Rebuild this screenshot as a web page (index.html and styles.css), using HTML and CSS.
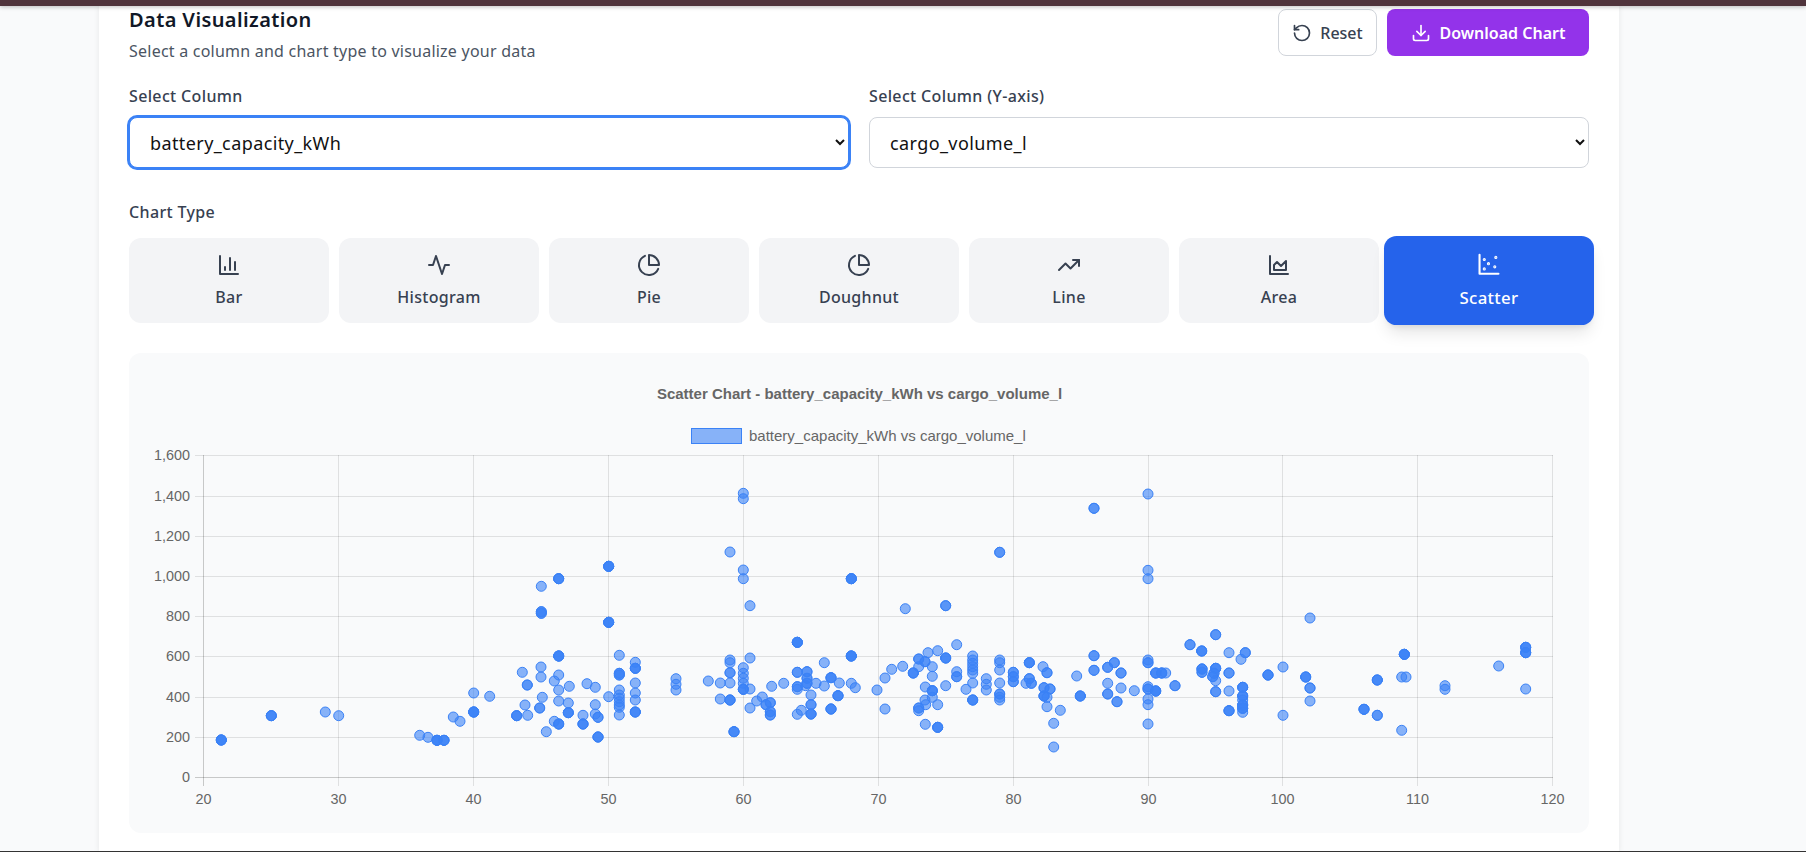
FILE: index.html
```html
<!DOCTYPE html>
<html lang="en">
<head>
<meta charset="utf-8">
<title>Data Visualization</title>
<link rel="stylesheet" href="styles.css">
</head>
<body>
<div class="topbar"></div>
<main class="card">
  <header class="head">
    <div>
      <h2 class="title">Data Visualization</h2>
      <p class="subtitle">Select a column and chart type to visualize your data</p>
    </div>
    <div class="actions">
      <button class="btn btn-reset"><svg class="ico-sm" viewBox="0 0 24 24"><path d="M3 12a9 9 0 1 0 9-9 9.75 9.75 0 0 0-6.74 2.74L3 8"/><path d="M3 3v5h5"/></svg>Reset</button>
      <button class="btn btn-download"><svg class="ico-sm" viewBox="0 0 24 24"><path d="M21 15v4a2 2 0 0 1-2 2H5a2 2 0 0 1-2-2v-4"/><path d="m7 10 5 5 5-5"/><path d="M12 15V3"/></svg>Download Chart</button>
    </div>
  </header>

  <div class="selects">
    <label class="field"><span class="label">Select Column</span>
      <select class="select select-focus"><option>battery_capacity_kWh</option></select></label>
    <label class="field"><span class="label">Select Column (Y-axis)</span>
      <select class="select"><option>cargo_volume_l</option></select></label>
  </div>

  <div class="label type-label">Chart Type</div>
  <div class="types">
    <button class="type"><svg class="ico" viewBox="0 0 24 24"><path d="M3 3v18h18"/><path d="M18 17V9"/><path d="M13 17V5"/><path d="M8 17v-3"/></svg>Bar</button>
    <button class="type"><svg class="ico" viewBox="0 0 24 24"><path d="M22 12h-4l-3 9L9 3l-3 9H2"/></svg>Histogram</button>
    <button class="type"><svg class="ico" viewBox="0 0 24 24"><path d="M21.21 15.89A10 10 0 1 1 8 2.83"/><path d="M22 12A10 10 0 0 0 12 2v10z"/></svg>Pie</button>
    <button class="type"><svg class="ico" viewBox="0 0 24 24"><path d="M21.21 15.89A10 10 0 1 1 8 2.83"/><path d="M22 12A10 10 0 0 0 12 2v10z"/></svg>Doughnut</button>
    <button class="type"><svg class="ico" viewBox="0 0 24 24"><path d="m22 7-8.5 8.5-5-5L2 17"/><path d="M16 7h6v6"/></svg>Line</button>
    <button class="type"><svg class="ico" viewBox="0 0 24 24"><path d="M3 3v18h18"/><path d="M7 12v5h12V8l-5 5-4-4Z"/></svg>Area</button>
    <button class="type type-active"><svg class="ico" viewBox="0 0 24 24"><path d="M3 3v18h18"/><circle class="ico-dot" cx="7.5" cy="7.5" r=".5"/><circle class="ico-dot" cx="18.5" cy="5.5" r=".5"/><circle class="ico-dot" cx="11.5" cy="11.5" r=".5"/><circle class="ico-dot" cx="7.5" cy="16.5" r=".5"/><circle class="ico-dot" cx="17.5" cy="14.5" r=".5"/></svg>Scatter</button>
  </div>

  <section class="chart-box">
    <svg class="chart" id="chart" viewBox="129 353 1460 480">
      <text class="c-title" x="859.5" y="399">Scatter Chart - battery_capacity_kWh vs cargo_volume_l</text>
      <rect class="c-swatch" x="691.5" y="428.5" width="50" height="15"/>
      <text class="c-legend" x="749" y="440.5">battery_capacity_kWh vs cargo_volume_l</text>
      <path class="c-grid" d="M195 455.5H1553M195 496.5H1553M195 536.5H1553M195 576.5H1553M195 616.5H1553M195 656.5H1553M195 697.5H1553M195 737.5H1553M338.5 455V786M473.5 455V786M608.5 455V786M743.5 455V786M878.5 455V786M1013.5 455V786M1148.5 455V786M1282.5 455V786M1417.5 455V786M1552.5 455V786"/>
      <path class="c-axis" d="M203.5 455V786M195 777.5H1553"/>
      <g class="c-y">
        <text x="190" y="460">1,600</text><text x="190" y="501">1,400</text><text x="190" y="541">1,200</text>
        <text x="190" y="581">1,000</text><text x="190" y="621">800</text><text x="190" y="661">600</text>
        <text x="190" y="702">400</text><text x="190" y="742">200</text><text x="190" y="782">0</text>
      </g>
      <g class="c-x">
        <text x="203.5" y="804">20</text><text x="338.5" y="804">30</text><text x="473.5" y="804">40</text>
        <text x="608.5" y="804">50</text><text x="743.5" y="804">60</text><text x="878.5" y="804">70</text>
        <text x="1013.5" y="804">80</text><text x="1148.5" y="804">90</text><text x="1282.5" y="804">100</text>
        <text x="1417.5" y="804">110</text><text x="1552.5" y="804">120</text>
      </g>
      <g class="c-points" id="points"></g>
    </svg>
  </section>
</main>
<div class="bottomline"></div>
<script src="chart.js"></script>
</body>
</html>
```
FILE: styles.css
```css
* { box-sizing: border-box; }
html, body { margin: 0; height: 852px; overflow: hidden; }
body {
  background: #f9fafb;
  font-family: "Noto Sans", "Open Sans", sans-serif;
  color: #374151;
  display: flex;
  flex-direction: column;
}
.topbar {
  height: 6px;
  flex: none;
  background: #50343c;
  box-shadow: 0 1px 4px rgba(0, 0, 0, .25);
  position: relative;
  z-index: 2;
}
.card {
  flex: 1;
  width: 1520px;
  margin-left: 99px;
  padding: 0 30px;
  background: #fff;
  box-shadow: 0 0 6px rgba(0, 0, 0, .08);
}
.head { display: flex; justify-content: space-between; align-items: flex-start; }
.title { margin: 0; font-size: 20px; line-height: 28px; font-weight: 600; letter-spacing: .4px; color: #111827; }
.subtitle { margin: 5px 0 0; font-size: 16px; line-height: 24px; letter-spacing: .23px; color: #4b5563; }
.actions { display: flex; gap: 10px; margin-top: 3px; }
.btn {
  height: 47px;
  display: flex;
  align-items: center;
  justify-content: center;
  gap: 8px;
  border-radius: 8px;
  font: 500 16px/24px "Noto Sans", "Open Sans", sans-serif;
  border: 1px solid transparent;
}
.btn-reset { width: 99px; background: #fff; border-color: #d1d5db; color: #374151; }
.btn-download { width: 202px; background: #9333ea; color: #fff; font-weight: 600; gap: 9px; }
.ico-sm, .ico {
  fill: none;
  stroke: currentColor;
  stroke-width: 2;
  stroke-linecap: round;
  stroke-linejoin: round;
  flex: none;
}
.ico-sm { width: 20px; height: 20px; }
.ico { width: 24px; height: 24px; }
.ico-dot { fill: currentColor; }
.selects { display: grid; grid-template-columns: 1fr 1fr; gap: 20px; margin-top: 21px; }
.field { display: block; }
.label { display: block; font-size: 16px; line-height: 24px; font-weight: 500; letter-spacing: .35px; color: #374151; }
.select {
  display: block;
  width: 100%;
  height: 51px;
  margin-top: 9px;
  padding: 0 0 0 16px;
  background: #fff;
  border: 1px solid #d1d5db;
  border-radius: 8px;
  font: 400 18px "Noto Sans", "Open Sans", sans-serif;
  letter-spacing: .4px;
  color: #111;
}
.select-focus { border-color: #3b82f6; box-shadow: 0 0 0 2px #3b82f6; outline: none; }
.type-label { margin-top: 32px; }
.types { display: grid; grid-template-columns: repeat(7, 1fr); gap: 10px; margin-top: 14px; }
.type {
  height: 85px;
  display: flex;
  flex-direction: column;
  align-items: center;
  gap: 8px;
  padding: 15px 0 14px;
  background: #f3f4f6;
  border: 0;
  border-radius: 12px;
  font: 500 16px/24px "Noto Sans", "Open Sans", sans-serif;
  letter-spacing: .3px;
  color: #374151;
}
.type-active {
  background: #2563eb;
  color: #fff;
  transform: scale(1.05);
  box-shadow: 0 10px 15px -3px rgba(0, 0, 0, .1), 0 4px 6px -4px rgba(0, 0, 0, .1);
}
.chart-box { margin-top: 30px; height: 480px; background: #f9fafb; border-radius: 12px; overflow: hidden; }
.chart { display: block; width: 1460px; height: 480px; font-family: "Liberation Sans", Arial, sans-serif; }
.c-title { font-size: 15px; font-weight: 700; fill: #666; text-anchor: middle; }
.c-legend { font-size: 15px; fill: #666; }
.c-swatch { fill: rgba(59, 130, 246, .6); stroke: #3b82f6; stroke-width: 1; }
.c-grid { fill: none; stroke: rgba(0, 0, 0, .1); stroke-width: 1; }
.c-axis { fill: none; stroke: rgba(0, 0, 0, .2); stroke-width: 1; }
.c-y text, .c-x text { font-size: 14.4px; fill: #666; }
.c-y text { text-anchor: end; }
.c-x text { text-anchor: middle; }
.c-points circle { fill: rgba(59, 130, 246, .6); stroke: #3b82f6; stroke-width: 1; }
.bottomline { position: fixed; left: 0; right: 0; bottom: 0; height: 1px; background: #333; }
```
FILE: chart.js
```js
// Points are [x, y, overlaps], grouped by the region they were measured in.
var regions = [
  [130, 620, [[274,360,4],[424,287,3],[586,276,1],[626,287,1],[869,346,1],[894,352,1],[921,361,4],[942,361,3],[970,291,1],[990,304,1],[1031,219,1],[1031,276,4],[1079,229,1],[1160,287,3],[1177,157,1],[1192,195,2],[1185,255,1],[1193,286,1],[1229,264,2],[1233,141,1],[1233,171,1],[1237,232,1],[1249,335,1],[1273,183,1],[1286,165,1],[1286,210,1],[1286,243,1],[1273,304,1],[1286,312,3],[1286,108,4],[1318,199,1],[1315,249,1],[1315,278,3],[1359,286,1],[1359,312,3],[1371,191,1],[1396,202,1],[1396,254,1],[1396,282,1],[1404,292,2],[1404,351,3],[1436,230,1],[1436,7,4],[1468,106,1],[1468,160,2],[1468,165,2],[1468,210,1],[1468,225,1],[1468,235,1],[1468,245,1],[1468,255,1],[1468,262,1],[1468,285,1]]],
  [130, 370, [[1234,649,1],[1286,626,3],[1234,725,2],[1234,730,2],[1436,589,4]]],
  [630, 620, [[16,127,1],[16,145,3],[16,189,1],[16,219,1],[16,240,1],[16,276,3],[138,176,1],[138,193,1],[138,210,1],[235,183,1],[271,189,1],[271,237,1],[300,120,1],[300,128,1],[300,158,2],[300,189,1],[300,240,3],[312,335,3],[340,143,1],[340,160,1],[340,175,1],[340,190,1],[340,208,3],[360,114,1],[360,207,1],[360,264,1],[380,243,1],[397,231,1],[408,254,2],[425,199,1],[421,248,2],[421,275,2],[421,285,2],[461,190,1],[502,67,4],[502,157,2],[502,200,2],[502,208,1],[502,283,1],[514,271,1],[531,155,2],[531,175,2],[531,190,2],[527,197,1],[558,190,1],[543,225,1],[543,254,2],[543,282,3],[583,128,1],[583,198,1],[603,173,3],[603,267,3],[624,227,3],[628,189,1],[664,108,4],[664,190,1],[676,203,1],[741,210,1],[765,174,1],[765,267,1],[785,148,1],[818,139,1],[850,159,3],[866,117,2],[866,140,1],[866,264,2],[866,272,1],[885,125,2],[894,98,1],[923,92,1],[947,114,3],[907,140,1],[907,169,1],[886,201,1],[907,212,3],[907,232,1],[885,240,1],[887,254,1],[923,254,1],[886,313,1],[923,322,3],[947,197,1],[980,74,1],[980,155,1],[980,170,2],[1008,208,1],[1028,108,1],[1028,120,1],[1028,130,1],[1028,140,1],[1028,150,1],[1028,160,1],[1028,189,1],[1028,240,3],[1069,176,1],[1069,193,1],[1069,210,1],[1109,120,1],[1109,128,1],[1109,150,1],[1109,189,1],[1109,222,2],[1109,232,1],[1109,240,1],[1150,157,2],[1150,170,2],[1150,185,2],[1198,128,3],[1198,176,2],[1188,190,1],[1204,190,2],[1239,140,1],[1251,158,2],[1242,203,2],[1260,207,2],[1242,228,3],[1251,232,1],[1251,260,1],[1291,271,1],[1271,310,1],[1271,381,1],[1340,168,1],[1351,228,3],[1392,107,2],[1392,151,2],[1433,142,2],[1433,190,1],[1433,222,2],[1453,128,2],[1461,245,2],[1473,159,2],[1473,204,1]]],
  [630, 440, [[340,160,1],[340,176,1],[300,336,1],[340,390,1],[340,416,1],[360,497,1],[664,416,4],[826,506,1],[947,497,2],[1109,337,2],[1392,205,2]]],
  [1130, 440, [[54,162,1],[54,391,1],[54,416,1],[257,584,2]]],
  [1130, 590, [[180,164,2],[215,183,3],[297,188,1],[333,208,1],[346,188,2],[54,210,1],[54,218,2],[77,249,3],[95,249,3],[107,249,1],[216,237,3],[216,247,2],[257,235,3],[252,250,2],[248,260,2],[257,272,1],[297,249,2],[135,287,2],[54,290,1],[54,297,2],[13,302,1],[77,303,4],[257,305,2],[297,303,1],[54,327,1],[54,344,1],[54,402,1],[338,292,3],[338,318,3],[338,330,1],[338,345,3],[338,355,3],[338,367,1],[297,362,3],[414,255,3],[459,231,1],[459,376,1],[527,261,3],[540,294,2],[540,333,1],[540,84,1],[702,358,3],[742,270,3],[742,376,2],[815,421,1],[815,261,1],[828,261,1],[823,193,4],[945,287,1],[945,298,1],[1106,228,1],[1187,172,3],[1187,188,3],[1187,297,1]]]
];
var group = document.getElementById('points');
regions.forEach(function (region) {
  region[2].forEach(function (p) {
    for (var i = 0; i < p[2]; i++) {
      var c = document.createElementNS('http://www.w3.org/2000/svg', 'circle');
      c.setAttribute('cx', (region[0] + p[0] / 3).toFixed(1));
      c.setAttribute('cy', (region[1] + p[1] / 3).toFixed(1));
      c.setAttribute('r', 5);
      group.appendChild(c);
    }
  });
});
```
